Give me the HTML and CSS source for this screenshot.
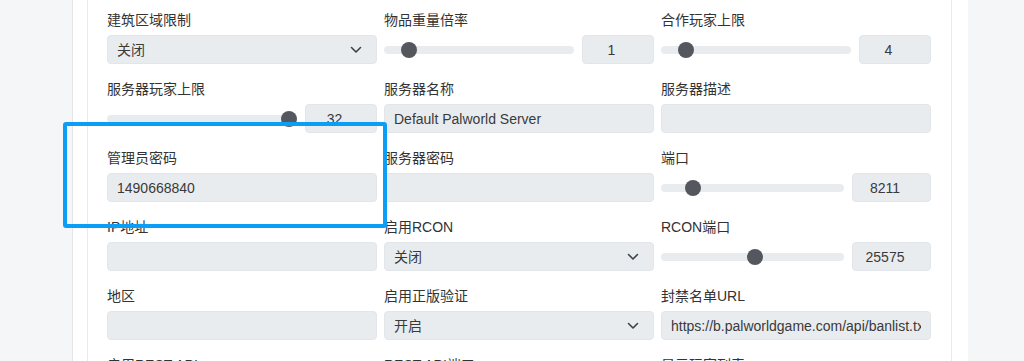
FILE: index.html
```html
<!DOCTYPE html>
<html lang="zh-CN">
<head>
  <meta charset="UTF-8" />
  <meta name="viewport" content="width=device-width, initial-scale=1" />
  <title>Palworld 服务器设置</title>
  <link rel="stylesheet" href="styles.css">
</head>
<body>

  <div class="shell">
    <div class="panel">
      <form class="settings-grid">

        <div class="field">
          <label>建筑区域限制</label>
          <div class="select-wrap">
            <select class="control"><option>关闭</option><option>开启</option></select>
            <svg class="chevron" width="12" height="8" viewBox="0 0 12 8"><path d="M1.5 1.5 6 6l4.5-4.5" fill="none" stroke="#3d4247" stroke-width="1.6" stroke-linecap="round" stroke-linejoin="round"/></svg>
          </div>
        </div>

        <div class="field">
          <label>物品重量倍率</label>
          <div class="slider-row">
            <input type="range" class="range" min="0" max="10" value="1" />
            <input type="text" class="control number" value="1" />
          </div>
        </div>

        <div class="field">
          <label>合作玩家上限</label>
          <div class="slider-row">
            <input type="range" class="range" min="1" max="32" value="4" />
            <input type="text" class="control number" value="4" />
          </div>
        </div>

        <div class="field">
          <label>服务器玩家上限</label>
          <div class="slider-row">
            <input type="range" class="range" min="1" max="32" value="32" />
            <input type="text" class="control number" value="32" />
          </div>
        </div>

        <div class="field">
          <label>服务器名称</label>
          <input type="text" class="control" value="Default Palworld Server" />
        </div>

        <div class="field">
          <label>服务器描述</label>
          <input type="text" class="control" value="" />
        </div>

        <div class="field">
          <label>管理员密码</label>
          <input type="text" class="control" value="1490668840" />
        </div>

        <div class="field">
          <label>服务器密码</label>
          <input type="text" class="control" value="" />
        </div>

        <div class="field">
          <label>端口</label>
          <div class="slider-row wide">
            <input type="range" class="range" min="1400" max="48400" value="8211" />
            <input type="text" class="control number" value="8211" />
          </div>
        </div>

        <div class="field">
          <label>IP地址</label>
          <input type="text" class="control" value="" />
        </div>

        <div class="field">
          <label>启用RCON</label>
          <div class="select-wrap">
            <select class="control"><option>关闭</option><option>开启</option></select>
            <svg class="chevron" width="12" height="8" viewBox="0 0 12 8"><path d="M1.5 1.5 6 6l4.5-4.5" fill="none" stroke="#3d4247" stroke-width="1.6" stroke-linecap="round" stroke-linejoin="round"/></svg>
          </div>
        </div>

        <div class="field">
          <label>RCON端口</label>
          <div class="slider-row wide">
            <input type="range" class="range" min="1400" max="48400" value="25575" />
            <input type="text" class="control number" value="25575" />
          </div>
        </div>

        <div class="field">
          <label>地区</label>
          <input type="text" class="control" value="" />
        </div>

        <div class="field">
          <label>启用正版验证</label>
          <div class="select-wrap">
            <select class="control"><option>开启</option><option>关闭</option></select>
            <svg class="chevron" width="12" height="8" viewBox="0 0 12 8"><path d="M1.5 1.5 6 6l4.5-4.5" fill="none" stroke="#3d4247" stroke-width="1.6" stroke-linecap="round" stroke-linejoin="round"/></svg>
          </div>
        </div>

        <div class="field">
          <label>封禁名单URL</label>
          <input type="text" class="control" value="https://b.palworldgame.com/api/banlist.txt" />
        </div>

        <div class="field">
          <label>启用REST API</label>
        </div>

        <div class="field">
          <label>REST API端口</label>
        </div>

        <div class="field">
          <label>显示玩家列表</label>
        </div>

      </form>
    </div>
  </div>

  <div class="highlight"></div>

</body>
</html>
```

FILE: styles.css
```css
* {
  box-sizing: border-box;
}

html, body {
  margin: 0;
  height: 361px;
  overflow: hidden;
}

body {
  background-color: #f5f6f8;
  font-family: 'Liberation Sans', 'Noto Sans CJK SC', sans-serif;
  color: #333;
}

.shell {
  margin-left: 72px;
  width: 896px;
  min-height: 361px;
  background: #fff;
  border-left: 1px solid #e3e5e8;
  padding-left: 14px;
}

.panel {
  width: 865px;
  min-height: 361px;
  border-left: 1px solid #e8eaed;
  border-right: 1px solid #e8eaed;
  padding: 10px 20px 0 19px;
}

.settings-grid {
  display: grid;
  grid-template-columns: repeat(3, 1fr);
  column-gap: 7px;
  row-gap: 15px;
}

.field label {
  display: block;
  font-size: 14px;
  line-height: 21px;
  margin-bottom: 4px;
  color: #333;
}

.control {
  display: block;
  width: 100%;
  height: 29px;
  padding: 0 9px;
  font-family: inherit;
  font-size: 14px;
  color: #3a3a3a;
  background-color: #e9ecef;
  border: 1px solid #e2e5e9;
  border-radius: 4px;
  outline: none;
}

.select-wrap {
  position: relative;
}

.select-wrap select {
  appearance: none;
  -webkit-appearance: none;
  padding-right: 30px;
}

.chevron {
  position: absolute;
  right: 15px;
  top: 11px;
  pointer-events: none;
}

.slider-row {
  display: grid;
  grid-template-columns: 1fr 72px;
  gap: 8px;
  align-items: center;
}

.slider-row.wide {
  grid-template-columns: 1fr 79px;
}

.number {
  text-align: center;
  padding: 0 15px 0 2px;
}

.range {
  -webkit-appearance: none;
  appearance: none;
  width: 100%;
  height: 16px;
  margin: 0;
  background: transparent;
}

.range::-webkit-slider-runnable-track {
  height: 8px;
  background: #e9ecef;
  border-radius: 4px;
}

.range::-webkit-slider-thumb {
  -webkit-appearance: none;
  width: 16px;
  height: 16px;
  margin-top: -4px;
  border-radius: 50%;
  background: #54585e;
  border: none;
}

.highlight {
  position: absolute;
  left: 63px;
  top: 122px;
  width: 324px;
  height: 106px;
  border: 4px solid #0b9ef7;
  border-radius: 3px;
}
```
